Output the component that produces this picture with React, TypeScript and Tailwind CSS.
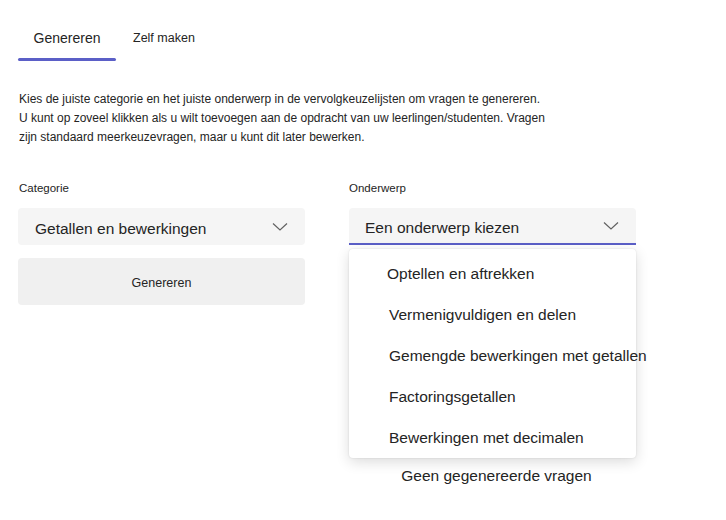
import React from "react";

const items = [
  "Optellen en aftrekken",
  "Vermenigvuldigen en delen",
  "Gemengde bewerkingen met getallen",
  "Factoringsgetallen",
  "Bewerkingen met decimalen",
];

function Chevron() {
  return (
    <svg width="16" height="10" viewBox="0 0 16 10" className="text-[#616161]">
      <polyline points="1,1.5 8,8 15,1.5" fill="none" stroke="currentColor" strokeWidth="1.2" />
    </svg>
  );
}

export default function App() {
  return (
    <div className="w-[726px] h-[520px] bg-white text-[#242424] font-['Liberation_Sans',Arial,sans-serif] overflow-hidden">
      {/* tabs */}
      <div className="flex items-start pl-[18px] pt-[29px]">
        <div className="w-[98px] flex flex-col items-center">
          <span className="text-[14px] leading-[18px]">Genereren</span>
          <div className="mt-[11px] h-[3px] w-full rounded-full bg-[#5b5fc7]" />
        </div>
        <span className="ml-[17px] text-[12.5px] leading-[18px]">Zelf maken</span>
      </div>

      <p className="mt-[29px] pl-[19px] text-[12px] leading-[19px]">
        Kies de juiste categorie en het juiste onderwerp in de vervolgkeuzelijsten om vragen te genereren.
        <br />
        U kunt op zoveel klikken als u wilt toevoegen aan de opdracht van uw leerlingen/studenten. Vragen
        <br />
        zijn standaard meerkeuzevragen, maar u kunt dit later bewerken.
      </p>

      <div className="mt-[34px] flex gap-[44px] pl-[18px]">
        <div className="w-[287px] flex flex-col">
          <label className="text-[11.5px] leading-[14px] pl-[1px]">Categorie</label>
          <div className="mt-[13px] h-[37px] rounded-[4px] bg-[#f5f5f5] flex items-center justify-between pl-[17px] pr-[17px]">
            <span className="text-[15.5px] pt-[5px]">Getallen en bewerkingen</span>
            <Chevron />
          </div>
          <button className="mt-[13px] h-[47px] rounded-[4px] bg-[#f0f0f0] text-[12.5px] text-[#242424] pt-[4px]">
            Genereren
          </button>
        </div>

        <div className="w-[287px] flex flex-col relative">
          <label className="text-[11.5px] leading-[14px]">Onderwerp</label>
          <div className="mt-[13px] h-[37px] rounded-t-[4px] bg-[#f5f5f5] border-b-2 border-[#5b5fc7] flex items-center justify-between pl-[16px] pr-[17px]">
            <span className="text-[15.5px] pt-[5px]">Een onderwerp kiezen</span>
            <Chevron />
          </div>
          <div className="mt-[221px] text-center text-[15.5px] leading-[20px] pl-[8px]">Geen gegenereerde vragen</div>

          <div className="absolute left-0 top-[68px] w-[287px] h-[209px] bg-white rounded-[4px] shadow-[0_4px_14px_rgba(0,0,0,0.14),0_0_2px_rgba(0,0,0,0.12)] pt-[4px]">
            {items.map((it, i) => (
              <div
                key={it}
                className={`h-[41px] flex items-center whitespace-nowrap text-[15.5px] ${i === 0 ? "pl-[38px]" : "pl-[40px]"}`}
              >
                {it}
              </div>
            ))}
          </div>
        </div>
      </div>
    </div>
  );
}
